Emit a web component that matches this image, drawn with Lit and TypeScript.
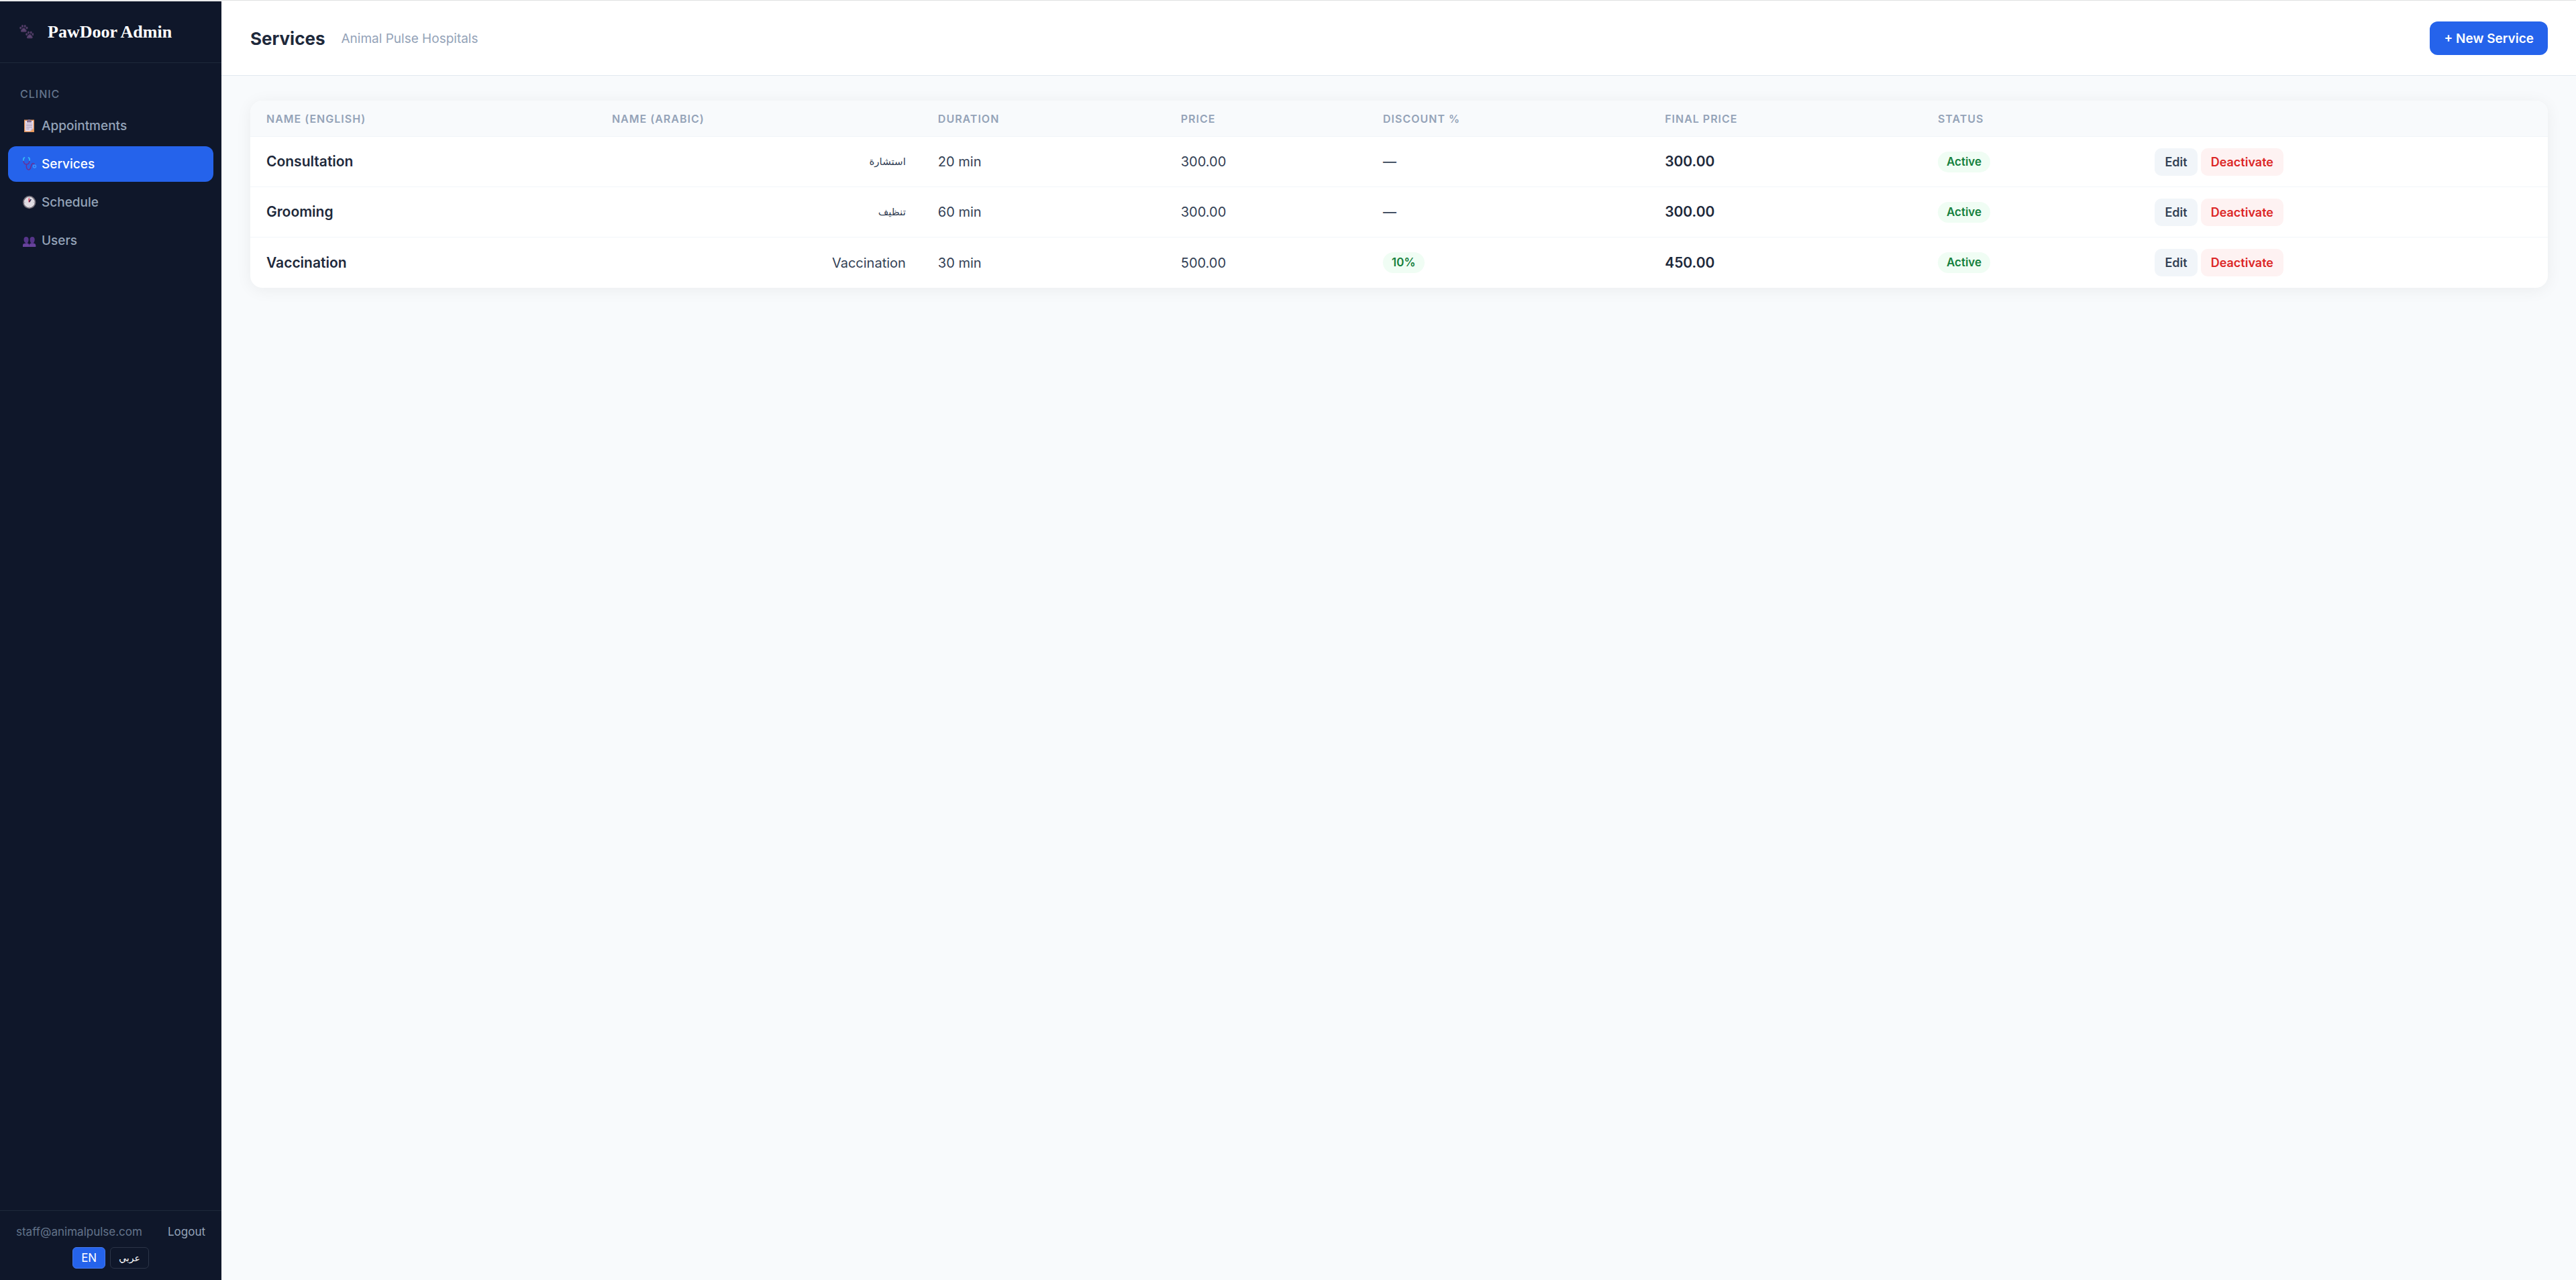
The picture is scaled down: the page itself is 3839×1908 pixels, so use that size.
import { LitElement, html, css, svg } from "lit";
import { customElement, property, state } from "lit/decorators.js";
import { classMap } from "lit/directives/class-map.js";

interface Service {
  name: string;
  nameAr: string;
  minutes: number;
  price: number;
  discount: number;
}

const SERVICES: Service[] = [
  { name: "Consultation", nameAr: "استشارة", minutes: 20, price: 300, discount: 0 },
  { name: "Grooming", nameAr: "تنظيف", minutes: 60, price: 300, discount: 0 },
  { name: "Vaccination", nameAr: "Vaccination", minutes: 30, price: 500, discount: 10 },
];

const isArabic = (text: string) => /[\u0600-\u06ff]/.test(text);

const paw = (x: number, y: number) => svg`
  <g transform="translate(${x} ${y})" fill="#513c66">
    <ellipse cx="1.7" cy="4.6" rx="1.5" ry="1.9" />
    <ellipse cx="4.5" cy="2" rx="1.5" ry="1.9" />
    <ellipse cx="8.2" cy="2" rx="1.5" ry="1.9" />
    <ellipse cx="11" cy="4.6" rx="1.5" ry="1.9" />
    <path d="M6.3 4.6c2 0 2.4 1.7 3.6 2.8 1.4 1.3.9 3.4-1 3.4H3.7c-1.9 0-2.400-2.100-1-3.400 1.200-1.100 1.600-2.800 3.600-2.800z" />
    <path d="M4.500 8.500c.6-1.300 2.800-1.400 3.700-.2" stroke="#6d5584" stroke-width="1" fill="none" />
  </g>`;

const ICONS = {
  paws: svg`${paw(0, 0)}${paw(9, 9.5)}`,
  clipboard: svg`
    <rect x="2" y="1.500" width="15" height="18.500" fill="#e0935a" />
    <path d="M3.500 3h12v11.500L11.500 18.500h-8z" fill="#e9dff2" />
    <path d="M15.500 14.500v4h-4z" fill="#f0a868" />
    <path d="M11.500 18.500v-4h4z" fill="#c9bcd6" />
    <path d="M6 2.500h1.800V1h3.400v1.500H13v3H6z" fill="#84708f" />
    <path d="M5 8h9M5 10.400h9M5 12.800h9M5 15.200h5" stroke="#9d8fab" stroke-width="1" />`,
  stethoscope: svg`
    <path d="M1 5.500c.3 3.300 1.500 5.300 4.300 5.500 3.200.1 4.500-2.200 4.700-5.500M5.500 11c-.8 4.500.8 8 3.200 8 4.300 0 2.800-9.500 6.600-9.500 1.500 0 2 1 2.200 2" fill="none" stroke="#6b2f95" stroke-width="1.500" />
    <path d="M3.200 1C.6 1 .9 3 1 5.600M7.800 1c2.600 0 2.300 2 2.200 4.600" fill="none" stroke="#35b6f5" stroke-width="1.800" />
    <circle cx="17.500" cy="14" r="2" fill="#2563eb" stroke="#3f96ff" stroke-width="1.500" />`,
  clock: svg`
    <circle cx="9.700" cy="10.500" r="9.700" fill="#77707b" />
    <circle cx="9.700" cy="10.500" r="7.900" fill="#e0dde3" />
    <path d="M9.300 10.500V4.500" stroke="#e0314c" stroke-width="1.500" />
    <path d="M9.700 10l2.500-4" stroke="#3c2c50" stroke-width="1.600" />
    <path d="M9.700 3.100v1.200M9.700 16.700v1.200M2.300 10.500h1.200M15.900 10.500h1.200" stroke="#a39ca9" stroke-width=".8" />`,
  users: svg`
    <path d="M0 20v-2.700c0-1.800 1.400-2.500 4.600-2.800C2 13 1.500 11 1.500 9 1.500 6.300 2.800 5 5 5s3.600 1.300 3.600 4c0 2-.5 4-1.800 5.500 2 .3 2.700 1.200 2.700 2.800V20z" fill="#56358a" />
    <path d="M9.700 20v-2.700c0-1.700.7-2.500 2.700-2.800-1.300-1.500-1.800-3.500-1.800-5.500 0-2.700 1.400-4 3.600-4s3.500 1.300 3.500 4c0 2-.6 4-2 5.500 2.600.3 3.500 1.200 3.500 2.800V20z" fill="#56358a" />
    <path d="M0 20v-2.300c0-1.300 1.400-2 3.500-2.200h3.300c1.700.2 2.700.8 2.700 2.200V20zM9.700 20v-2.300c0-1.300 1-2 2.800-2.200h3.300c2 .2 3.400.8 3.400 2.200V20z" fill="#68439c" />`,
};

type IconName = keyof typeof ICONS;

@customElement("glyph-icon")
export class GlyphIcon extends LitElement {
  @property() name: IconName = "paws";

  static styles = css`
    :host {
      display: inline-flex;
      flex: none;
    }
    .glyph {
      display: block;
      width: 21px;
      height: 21px;
    }
  `;

  render() {
    return html`<svg class="glyph" viewBox="0 0 21 21" aria-hidden="true">${ICONS[this.name]}</svg>`;
  }
}

const NAV: { label: string; icon: IconName }[] = [
  { label: "Appointments", icon: "clipboard" },
  { label: "Services", icon: "stethoscope" },
  { label: "Schedule", icon: "clock" },
  { label: "Users", icon: "users" },
];

@customElement("admin-sidebar")
export class AdminSidebar extends LitElement {
  @state() private current = "Services";
  @state() private lang = "en";

  static styles = css`
    :host {
      display: flex;
      flex-direction: column;
      background: #0f172a;
      color: #94a3b8;
      font-size: 19px;
      line-height: 26px;
    }
    .brand {
      display: flex;
      align-items: center;
      gap: 21px;
      height: 91px;
      padding: 0 29px;
      border-bottom: 1px solid #1e293b;
      color: #fff;
      font-family: "Liberation Serif", serif;
      font-size: 26px;
      font-weight: 700;
    }
    .nav {
      display: flex;
      flex-direction: column;
      gap: 4px;
      padding: 34px 12px;
    }
    .section {
      margin: 0 0 5px;
      padding: 0 18px;
      color: #64748b;
      font-size: 16px;
      font-weight: 500;
      line-height: 24px;
      letter-spacing: 1px;
      text-transform: uppercase;
    }
    .item {
      display: flex;
      align-items: center;
      gap: 7px;
      height: 53px;
      padding: 0 22px;
      border-radius: 12px;
      color: #94a3b8;
      font-weight: 500;
      text-decoration: none;
    }
    .item.active {
      background: #2563eb;
      color: #fff;
    }
    .foot {
      display: flex;
      flex-direction: column;
      gap: 10px;
      margin-top: auto;
      padding: 18px 24px 17px;
      border-top: 1px solid #1e293b;
      font-size: 17px;
    }
    .account {
      display: flex;
      justify-content: space-between;
    }
    .email {
      color: #64748b;
    }
    .logout {
      padding: 0;
      border: 0;
      background: none;
      color: #94a3b8;
      font: inherit;
    }
    .langs {
      display: flex;
      justify-content: center;
      gap: 7px;
    }
    .lang {
      height: 32px;
      padding: 0 12px;
      border: 1px solid #2b3447;
      border-radius: 6px;
      background: transparent;
      color: #fff;
      font-family: inherit;
      font-size: 17px;
      line-height: 28px;
    }
    .lang:lang(ar) {
      font-size: 14px;
    }
    .lang.on {
      border-color: #4579ee;
      background: #2563eb;
    }
  `;

  private pick(e: Event, label: string) {
    e.preventDefault();
    this.current = label;
  }

  render() {
    return html`
      <div class="brand"><glyph-icon name="paws"></glyph-icon><span>PawDoor Admin</span></div>
      <nav class="nav">
        <p class="section">Clinic</p>
        ${NAV.map(
          (n) => html`<a
            class=${classMap({ item: true, active: n.label === this.current })}
            href="#${n.label.toLowerCase()}"
            @click=${(e: Event) => this.pick(e, n.label)}
            ><glyph-icon name=${n.icon}></glyph-icon><span>${n.label}</span></a
          >`
        )}
      </nav>
      <div class="foot">
        <div class="account">
          <span class="email">staff@animalpulse.com</span>
          <button class="logout" type="button">Logout</button>
        </div>
        <div class="langs">
          <button class=${classMap({ lang: true, on: this.lang === "en" })} type="button" @click=${() => (this.lang = "en")}>EN</button>
          <button class=${classMap({ lang: true, on: this.lang === "ar" })} type="button" lang="ar" @click=${() => (this.lang = "ar")}>عربي</button>
        </div>
      </div>
    `;
  }
}

@customElement("services-table")
export class ServicesTable extends LitElement {
  @property({ attribute: false }) rows: Service[] = [];

  static styles = css`
    :host {
      display: block;
      overflow: hidden;
      border-radius: 18px;
      background: #fff;
      box-shadow: 0 3px 24px rgba(0, 0, 0, 0.06);
    }
    .table {
      width: 100%;
      border-collapse: separate;
      border-spacing: 0;
      table-layout: fixed;
      color: #334155;
      font-size: 20px;
      line-height: 26px;
    }
    .c-name { width: 15.04%; }
    .c-arabic { width: 14.19%; }
    .c-duration { width: 10.57%; }
    .c-price { width: 8.8%; }
    .c-discount { width: 12.27%; }
    .c-final { width: 11.88%; }
    .c-status { width: 9.45%; }
    .head {
      height: 54px;
      box-sizing: border-box;
      padding: 0 24px;
      border-bottom: 1px solid #f1f5f9;
      background: #f8fafc;
      color: #94a3b8;
      font-size: 16px;
      font-weight: 600;
      letter-spacing: 1px;
      text-align: left;
      text-transform: uppercase;
    }
    .cell {
      height: 75px;
      box-sizing: border-box;
      padding: 0 24px;
      border-bottom: 1px solid #f1f5f9;
    }
    .row:last-child .cell {
      border-bottom: 0;
    }
    .cell:lang(ar) {
      font-size: 15px;
    }
    .strong {
      color: #1e293b;
      font-size: 21px;
      font-weight: 600;
    }
    .badge {
      display: inline-block;
      padding: 0 13px;
      border-radius: 16px;
      background: #f0fdf4;
      color: #15803d;
      font-size: 17px;
      font-weight: 600;
      line-height: 31px;
      vertical-align: middle;
    }
    .actions {
      display: flex;
      gap: 5px;
    }
    .act {
      height: 41px;
      padding: 0 15px;
      border: 0;
      border-radius: 10px;
      background: #f1f5f9;
      color: #334155;
      font-family: inherit;
      font-size: 18px;
      font-weight: 600;
    }
    .act.danger {
      background: #fef2f2;
      color: #dc2626;
    }
  `;

  render() {
    return html`
      <table class="table">
        <colgroup>
          <col class="c-name" /><col class="c-arabic" /><col class="c-duration" /><col class="c-price" />
          <col class="c-discount" /><col class="c-final" /><col class="c-status" /><col />
        </colgroup>
        <thead>
          <tr>
            ${["Name (English)", "Name (Arabic)", "Duration", "Price", "Discount %", "Final Price", "Status"].map(
              (h) => html`<th class="head" scope="col">${h}</th>`
            )}
            <td class="head"></td>
          </tr>
        </thead>
        <tbody>
          ${this.rows.map(
            (s) => html`<tr class="row">
              <td class="cell strong">${s.name}</td>
              <td class="cell" dir="rtl" lang=${isArabic(s.nameAr) ? "ar" : "en"}>${s.nameAr}</td>
              <td class="cell">${s.minutes} min</td>
              <td class="cell">${s.price.toFixed(2)}</td>
              <td class="cell">${s.discount ? html`<span class="badge">${s.discount}%</span>` : "—"}</td>
              <td class="cell strong">${(s.price * (1 - s.discount / 100)).toFixed(2)}</td>
              <td class="cell"><span class="badge">Active</span></td>
              <td class="cell">
                <div class="actions">
                  <button class="act" type="button">Edit</button>
                  <button class="act danger" type="button">Deactivate</button>
                </div>
              </td>
            </tr>`
          )}
        </tbody>
      </table>
    `;
  }
}

@customElement("app-root")
export class AppRoot extends LitElement {
  static styles = css`
    :host {
      display: grid;
      grid-template-columns: 330px 1fr;
      box-sizing: border-box;
      min-height: 100vh;
      padding-top: 1px;
      border-top: 1px solid #dfe0e1;
      background: #fff;
      font-family: Inter, "DejaVu Sans", sans-serif;
    }
    .main {
      background: #f8fafc;
    }
    .topbar {
      display: flex;
      align-items: center;
      gap: 24px;
      height: 110px;
      padding: 0 42px 0 43px;
      border-bottom: 1px solid #e2e8f0;
      background: #fff;
    }
    .title {
      margin: 0;
      color: #1e293b;
      font-size: 26px;
      font-weight: 700;
    }
    .clinic {
      color: #94a3b8;
      font-size: 19px;
    }
    .new {
      height: 50px;
      margin-left: auto;
      padding: 0 21px;
      border: 0;
      border-radius: 12px;
      background: #2563eb;
      color: #fff;
      font-family: inherit;
      font-size: 19px;
      font-weight: 600;
    }
    .content {
      padding: 37px 42px 37px 43px;
    }
  `;

  render() {
    return html`
      <admin-sidebar></admin-sidebar>
      <main class="main">
        <header class="topbar">
          <h1 class="title">Services</h1>
          <span class="clinic">Animal Pulse Hospitals</span>
          <button class="new" type="button">+ New Service</button>
        </header>
        <div class="content"><services-table .rows=${SERVICES}></services-table></div>
      </main>
    `;
  }
}
